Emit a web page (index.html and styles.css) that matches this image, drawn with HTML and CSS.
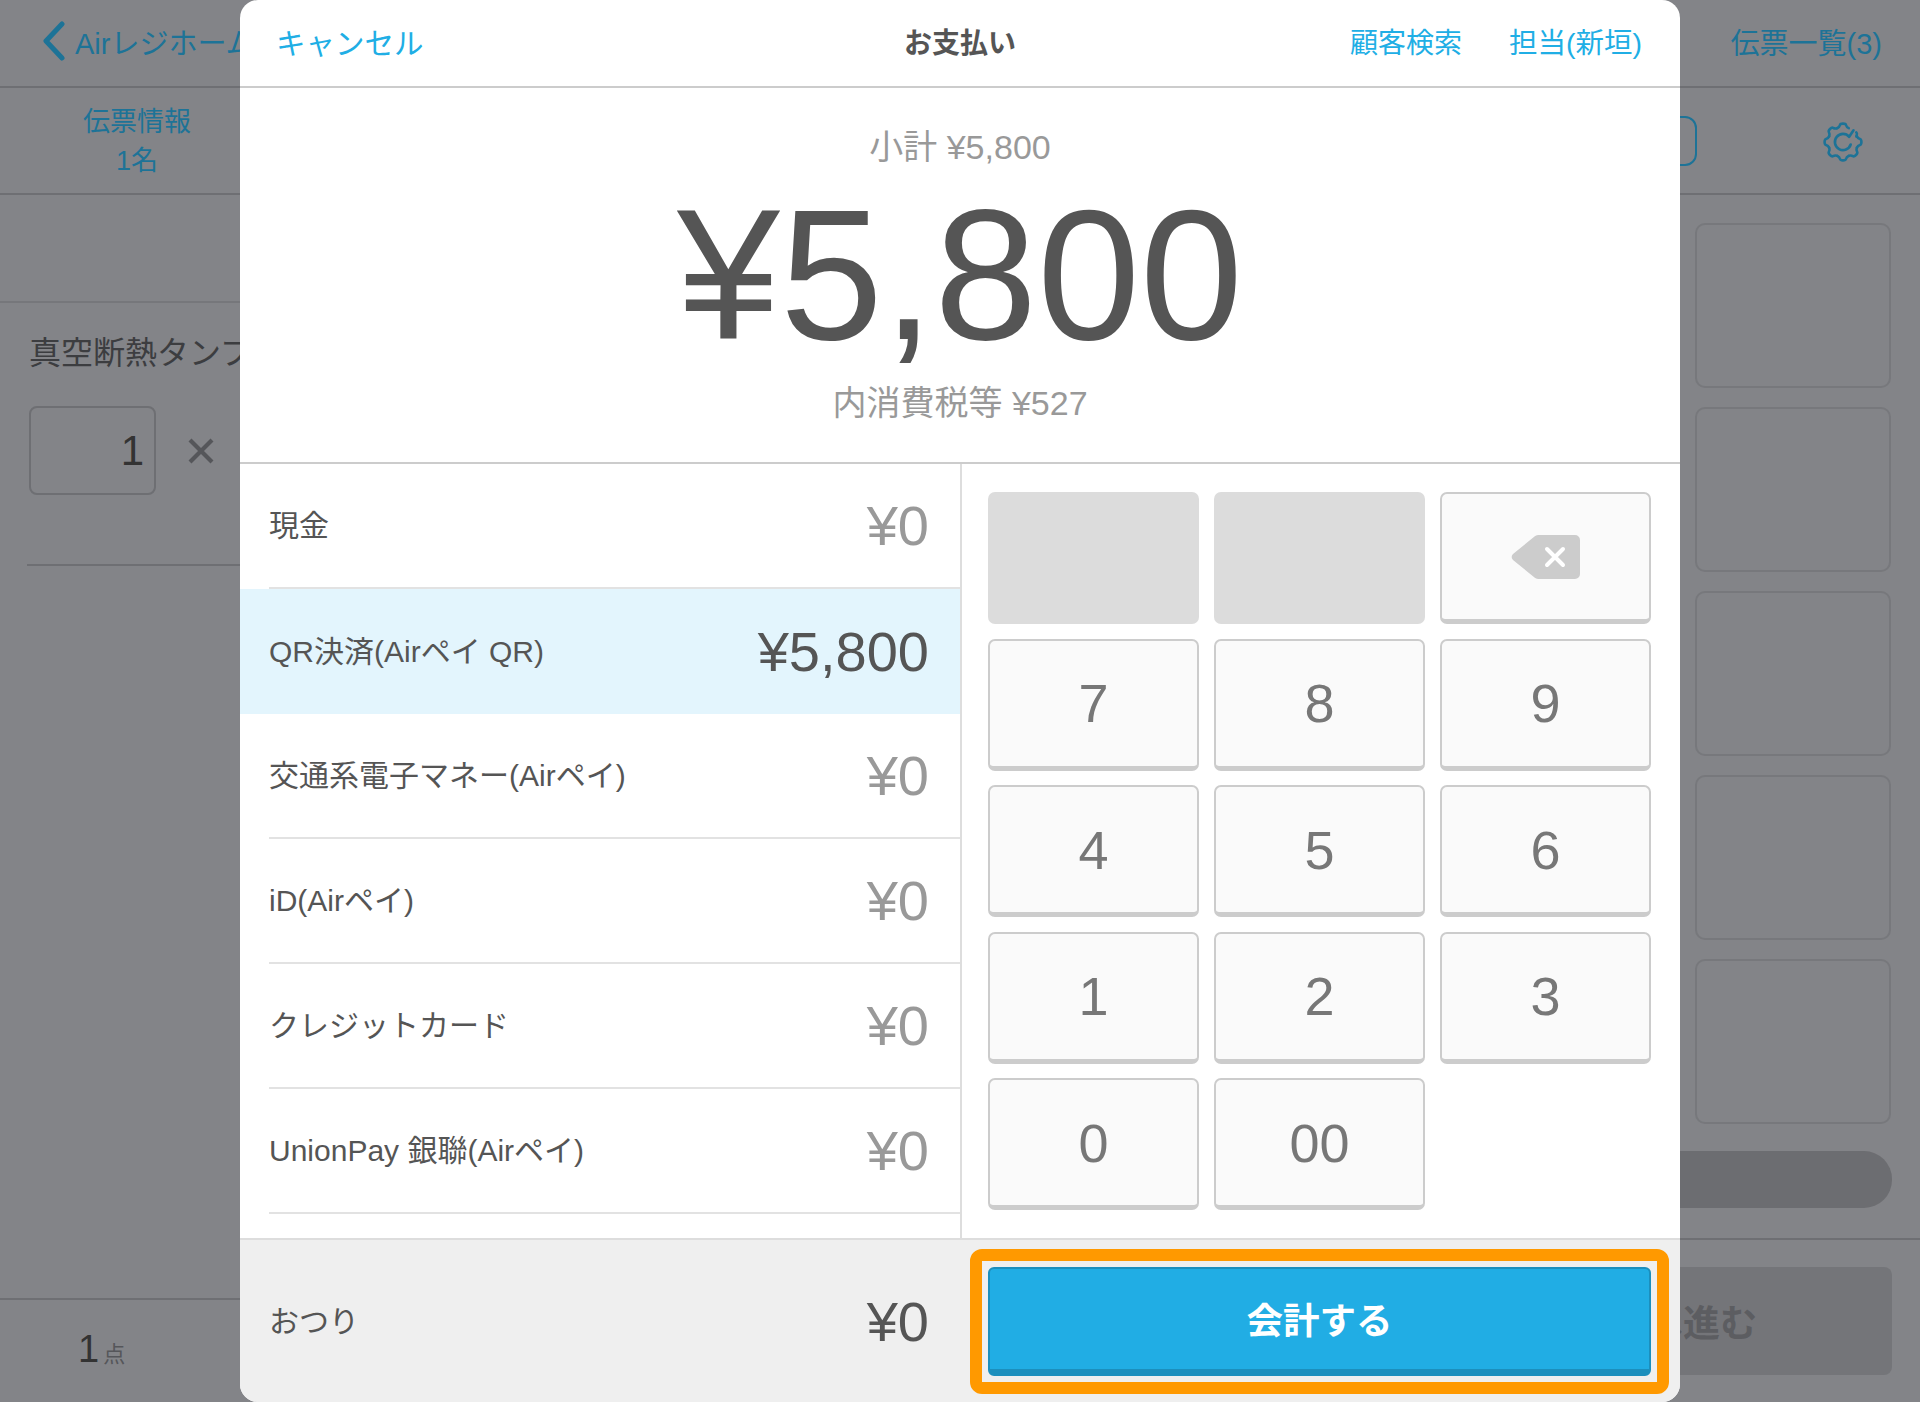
FILE: index.html
```html
<!DOCTYPE html>
<html lang="ja">
<head>
<meta charset="utf-8">
<title>お支払い</title>
<link rel="stylesheet" href="styles.css">
</head>
<body>
<div class="screen">
  <div class="bg">
    <header class="bg-top">
      <div class="bg-back">
        <svg class="chevron" viewBox="0 0 24 40" width="24" height="40"><path d="M20 3 4 20l16 17" fill="none" stroke="currentColor" stroke-width="5" stroke-linecap="round" stroke-linejoin="round"/></svg>
        <span>Airレジホーム</span>
      </div>
      <div class="bg-list">伝票一覧(3)</div>
    </header>
    <div class="bg-sub">
      <div class="bg-info">伝票情報<br>1名</div>
      <div class="bg-tools">
        <div class="bg-outline"></div>
        <svg class="gear" viewBox="0 0 40 40" width="40" height="40">
          <defs>
            <path id="tooth" d="M14.260 6.140C15.800 5.500 16.600 4.600 17 3C17.300 1.900 18 1.600 20 1.600C22 1.600 22.700 1.900 23 3C23.400 4.600 24.200 5.500 25.740 6.140"/>
          </defs>
          <g fill="none" stroke="currentColor" stroke-width="2.600" stroke-linecap="round" stroke-linejoin="round">
            <use href="#tooth"/>
            <use href="#tooth" transform="rotate(90 20 20)"/>
            <use href="#tooth" transform="rotate(135 20 20)"/>
            <use href="#tooth" transform="rotate(180 20 20)"/>
            <use href="#tooth" transform="rotate(225 20 20)"/>
            <use href="#tooth" transform="rotate(270 20 20)"/>
            <use href="#tooth" transform="rotate(315 20 20)"/>
            <path d="M33.300 10.300C34 11 34.100 11.800 33.800 12.800C33.200 14.300 33.200 15.200 33.860 14.260"/>
            <path d="M30.500 8.300 26.200 14.800A8.100 8.100 0 1 0 27.700 22.500"/>
          </g>
        </svg>
      </div>
    </div>
    <div class="bg-body">
      <div class="bg-left">
        <div class="bg-band"></div>
        <section class="bg-item">
          <div class="bg-name">真空断熱タンブラー</div>
          <div class="bg-qty-row">
            <div class="bg-qty">1</div>
            <svg class="times" viewBox="0 0 28 28" width="28" height="28"><path d="M3 3l22 22M25 3 3 25" stroke="currentColor" stroke-width="4.200"/></svg>
          </div>
          <div class="bg-rule"></div>
        </section>
        <footer class="bg-foot">
          <span class="bg-count-num">1</span><span class="bg-count-unit">点</span>
        </footer>
      </div>
      <aside class="bg-right">
        <div class="bg-cards">
          <div class="bg-card"></div>
          <div class="bg-card"></div>
          <div class="bg-card"></div>
          <div class="bg-card"></div>
          <div class="bg-card"></div>
          <div class="bg-pill"></div>
        </div>
        <div class="bg-action">
          <div class="bg-next">会計へ進む</div>
        </div>
      </aside>
    </div>
  </div>

  <div class="modal">
    <header class="m-head">
      <a class="link link-kana">キャンセル</a>
      <h1 class="m-title">お支払い</h1>
      <div class="m-head-right">
        <a class="link link-narrow">顧客検索</a>
        <a class="link">担当(新垣)</a>
      </div>
    </header>
    <section class="total">
      <div class="total-sub">小計 ¥5,800</div>
      <div class="total-main">¥5,800</div>
      <div class="total-sub">内消費税等 ¥527</div>
    </section>
    <section class="pay">
      <ul class="methods">
        <li class="method"><span class="label">現金</span><span class="amt">¥0</span></li>
        <li class="method is-active"><span class="label">QR決済(Airペイ QR)</span><span class="amt">¥5,800</span></li>
        <li class="method"><span class="label">交通系電子マネー(Airペイ)</span><span class="amt">¥0</span></li>
        <li class="method"><span class="label">iD(Airペイ)</span><span class="amt">¥0</span></li>
        <li class="method"><span class="label">クレジットカード</span><span class="amt">¥0</span></li>
        <li class="method"><span class="label">UnionPay 銀聯(Airペイ)</span><span class="amt">¥0</span></li>
      </ul>
      <div class="keys">
        <div class="key key-off"></div>
        <div class="key key-off"></div>
        <div class="key">
          <svg class="bs" viewBox="0 0 70 46" width="70" height="46"><path d="M27 1h37a5 5 0 0 1 5 5v34a5 5 0 0 1-5 5H27a5 5 0 0 1-3.500-1.500L2 26a4.500 4.500 0 0 1 0-6L23.500 2.500A5 5 0 0 1 27 1z" fill="#ccc"/><path d="M36 15l16 16M52 15 36 31" stroke="#fff" stroke-width="4" stroke-linecap="round"/></svg>
        </div>
        <div class="key">7</div><div class="key">8</div><div class="key">9</div>
        <div class="key">4</div><div class="key">5</div><div class="key">6</div>
        <div class="key">1</div><div class="key">2</div><div class="key">3</div>
        <div class="key">0</div><div class="key">00</div>
      </div>
    </section>
    <footer class="m-foot">
      <div class="change"><span class="label">おつり</span><span class="amt amt-dark">¥0</span></div>
      <div class="checkout-wrap">
        <button class="checkout">会計する</button>
        <div class="highlight"></div>
      </div>
    </footer>
  </div>
</div>
</body>
</html>
```

FILE: styles.css
```css
* { box-sizing: border-box; }
html, body { margin: 0; padding: 0; }
body {
  font-family: "Liberation Sans", "Noto Sans CJK JP", sans-serif;
  color: #555;
}
.screen {
  position: relative;
  width: 1920px;
  height: 1402px;
  overflow: hidden;
  background: #838488;
}

/* dimmed page behind the dialog */
.bg {
  height: 100%;
  display: flex;
  flex-direction: column;
  color: #37383b;
}
.bg-top {
  height: 88px;
  flex: none;
  border-bottom: 2px solid #6e6f73;
  display: flex;
  justify-content: space-between;
  align-items: center;
  padding: 0 38px 5px 42px;
  color: #1d7397;
  font-size: 29px;
}
.bg-back { display: flex; align-items: center; gap: 9px; }
.bg-sub {
  height: 107px;
  flex: none;
  border-bottom: 2px solid #6e6f73;
  display: flex;
  justify-content: space-between;
  align-items: center;
  color: #1d7397;
}
.bg-info {
  width: 274px;
  padding-top: 2px;
  text-align: center;
  font-size: 27px;
  line-height: 39px;
}
.bg-tools { display: flex; align-items: center; padding-right: 57px; }
.bg-outline {
  width: 200px;
  height: 50px;
  border: 2px solid #1d7397;
  border-radius: 12px;
  margin-right: 126px;
}
.gear { margin-top: 2px; }
.bg-body { flex: 1; min-height: 0; display: flex; justify-content: space-between; }
.bg-left { width: 900px; display: flex; flex-direction: column; }
.bg-band { height: 108px; flex: none; border-bottom: 2px solid #76777b; }
.bg-item {
  flex: 1;
  padding: 26px 0 0 29px;
  border-bottom: 2px solid #6e6f73;
}
.bg-name { font-size: 32px; line-height: 48px; color: #3c3d40; }
.bg-qty-row { display: flex; align-items: center; gap: 31px; margin-top: 29px; }
.bg-qty {
  width: 127px;
  height: 89px;
  border: 2px solid #6e6f73;
  border-radius: 8px;
  font-size: 42px;
  text-align: right;
  line-height: 85px;
  padding-right: 10px;
  color: #333;
}
.times { color: #55565a; }
.bg-rule { height: 2px; background: #6e6f73; margin: 69px 0 0 -2px; }
.bg-foot {
  height: 102px;
  flex: none;
  padding: 28px 0 0 78px;
  color: #333;
}
.bg-count-num { font-size: 38px; }
.bg-count-unit { font-size: 22px; margin-left: 4px; color: #55565a; }
.bg-right { width: 600px; display: flex; flex-direction: column; }
.bg-cards {
  height: 1045px;
  flex: none;
  padding: 28px 29px 0 0;
  display: flex;
  flex-direction: column;
  align-items: flex-end;
  gap: 19px;
  border-bottom: 2px solid #6e6f73;
}
.bg-card {
  width: 196px;
  height: 165px;
  flex: none;
  border: 2px solid #77787c;
  border-radius: 10px;
}
.bg-pill {
  width: 571px;
  height: 57px;
  flex: none;
  margin: 8px -1px 0 0;
  border-radius: 28px;
  background: #6c6d71;
}
.bg-action { padding: 27px 28px 0 0; }
.bg-next {
  height: 108px;
  border-radius: 8px;
  background: #747579;
  font-size: 37px;
  font-weight: 700;
  color: #5c5d61;
  display: flex;
  align-items: center;
  justify-content: flex-end;
  padding-right: 135px;
}

/* dialog */
.modal {
  position: absolute;
  left: 240px;
  top: 0;
  width: 1440px;
  height: 1402px;
  background: #fff;
  border-radius: 18px;
  overflow: hidden;
  display: flex;
  flex-direction: column;
}
.m-head {
  position: relative;
  height: 88px;
  flex: none;
  border-bottom: 2px solid #ccc;
  display: flex;
  justify-content: space-between;
  align-items: center;
  padding: 0 38px 5px 36px;
}
.link { color: #20aee5; font-size: 28.500px; }
.link-kana { font-size: 29.500px; }
.link-narrow { font-size: 28px; }
.m-title {
  position: absolute;
  left: 0;
  right: 0;
  margin: 0;
  text-align: center;
  font-size: 28px;
  font-weight: 700;
  color: #555;
}
.m-head-right { display: flex; align-items: center; gap: 47px; }
.total {
  height: 376px;
  flex: none;
  border-bottom: 2px solid #ccc;
  text-align: center;
  padding-top: 35px;
}
.total-sub { font-size: 34px; line-height: 48px; color: #999; }
.total-main {
  font-size: 185px;
  line-height: 208px;
  color: #555;
}
.pay { flex: 1; display: flex; min-height: 0; }
.methods {
  width: 722px;
  flex: none;
  margin: 0;
  padding: 0;
  list-style: none;
  border-right: 2px solid #ddd;
}
.method {
  height: 125px;
  margin-left: 29px;
  padding-right: 31px;
  display: flex;
  justify-content: space-between;
  align-items: center;
  border-bottom: 2px solid #e2e2e2;
}
.label { font-size: 30px; color: #555; padding-bottom: 5px; }
.method.is-active {
  margin-left: 0;
  padding-left: 29px;
  background: #e3f5fd;
  border-bottom: 0;
}
.amt { font-size: 56px; color: #999; }
.is-active .amt, .amt-dark { color: #555; }
.keys {
  flex: 1;
  display: grid;
  grid-template-columns: repeat(3, 211px);
  grid-auto-rows: 132px;
  column-gap: 15px;
  row-gap: 14.500px;
  padding: 28px 0 0 26px;
}
.key {
  border: 2px solid #ccc;
  border-bottom-width: 5px;
  border-radius: 7px;
  background: #fafafa;
  display: flex;
  align-items: center;
  justify-content: center;
  font-size: 54px;
  color: #777;
}
.key-off { background: #dcdcdc; border: 0; }
.m-foot {
  height: 164px;
  flex: none;
  background: #efefef;
  border-top: 2px solid #ddd;
  display: flex;
  align-items: center;
}
.change {
  width: 722px;
  padding: 0 33px 0 29px;
  display: flex;
  justify-content: space-between;
  align-items: center;
}
.checkout-wrap { position: relative; margin-left: 26px; }
.checkout {
  display: block;
  width: 663px;
  height: 109px;
  border: 2px solid #1c8fbd;
  border-bottom-width: 7px;
  border-radius: 6px;
  background: #21ade4;
  color: #fff;
  font: 700 36.500px "Liberation Sans", "Noto Sans CJK JP", sans-serif;
}
.highlight {
  position: absolute;
  inset: -18px;
  border: 12px solid #ff9900;
  border-radius: 12px;
  pointer-events: none;
}
```
